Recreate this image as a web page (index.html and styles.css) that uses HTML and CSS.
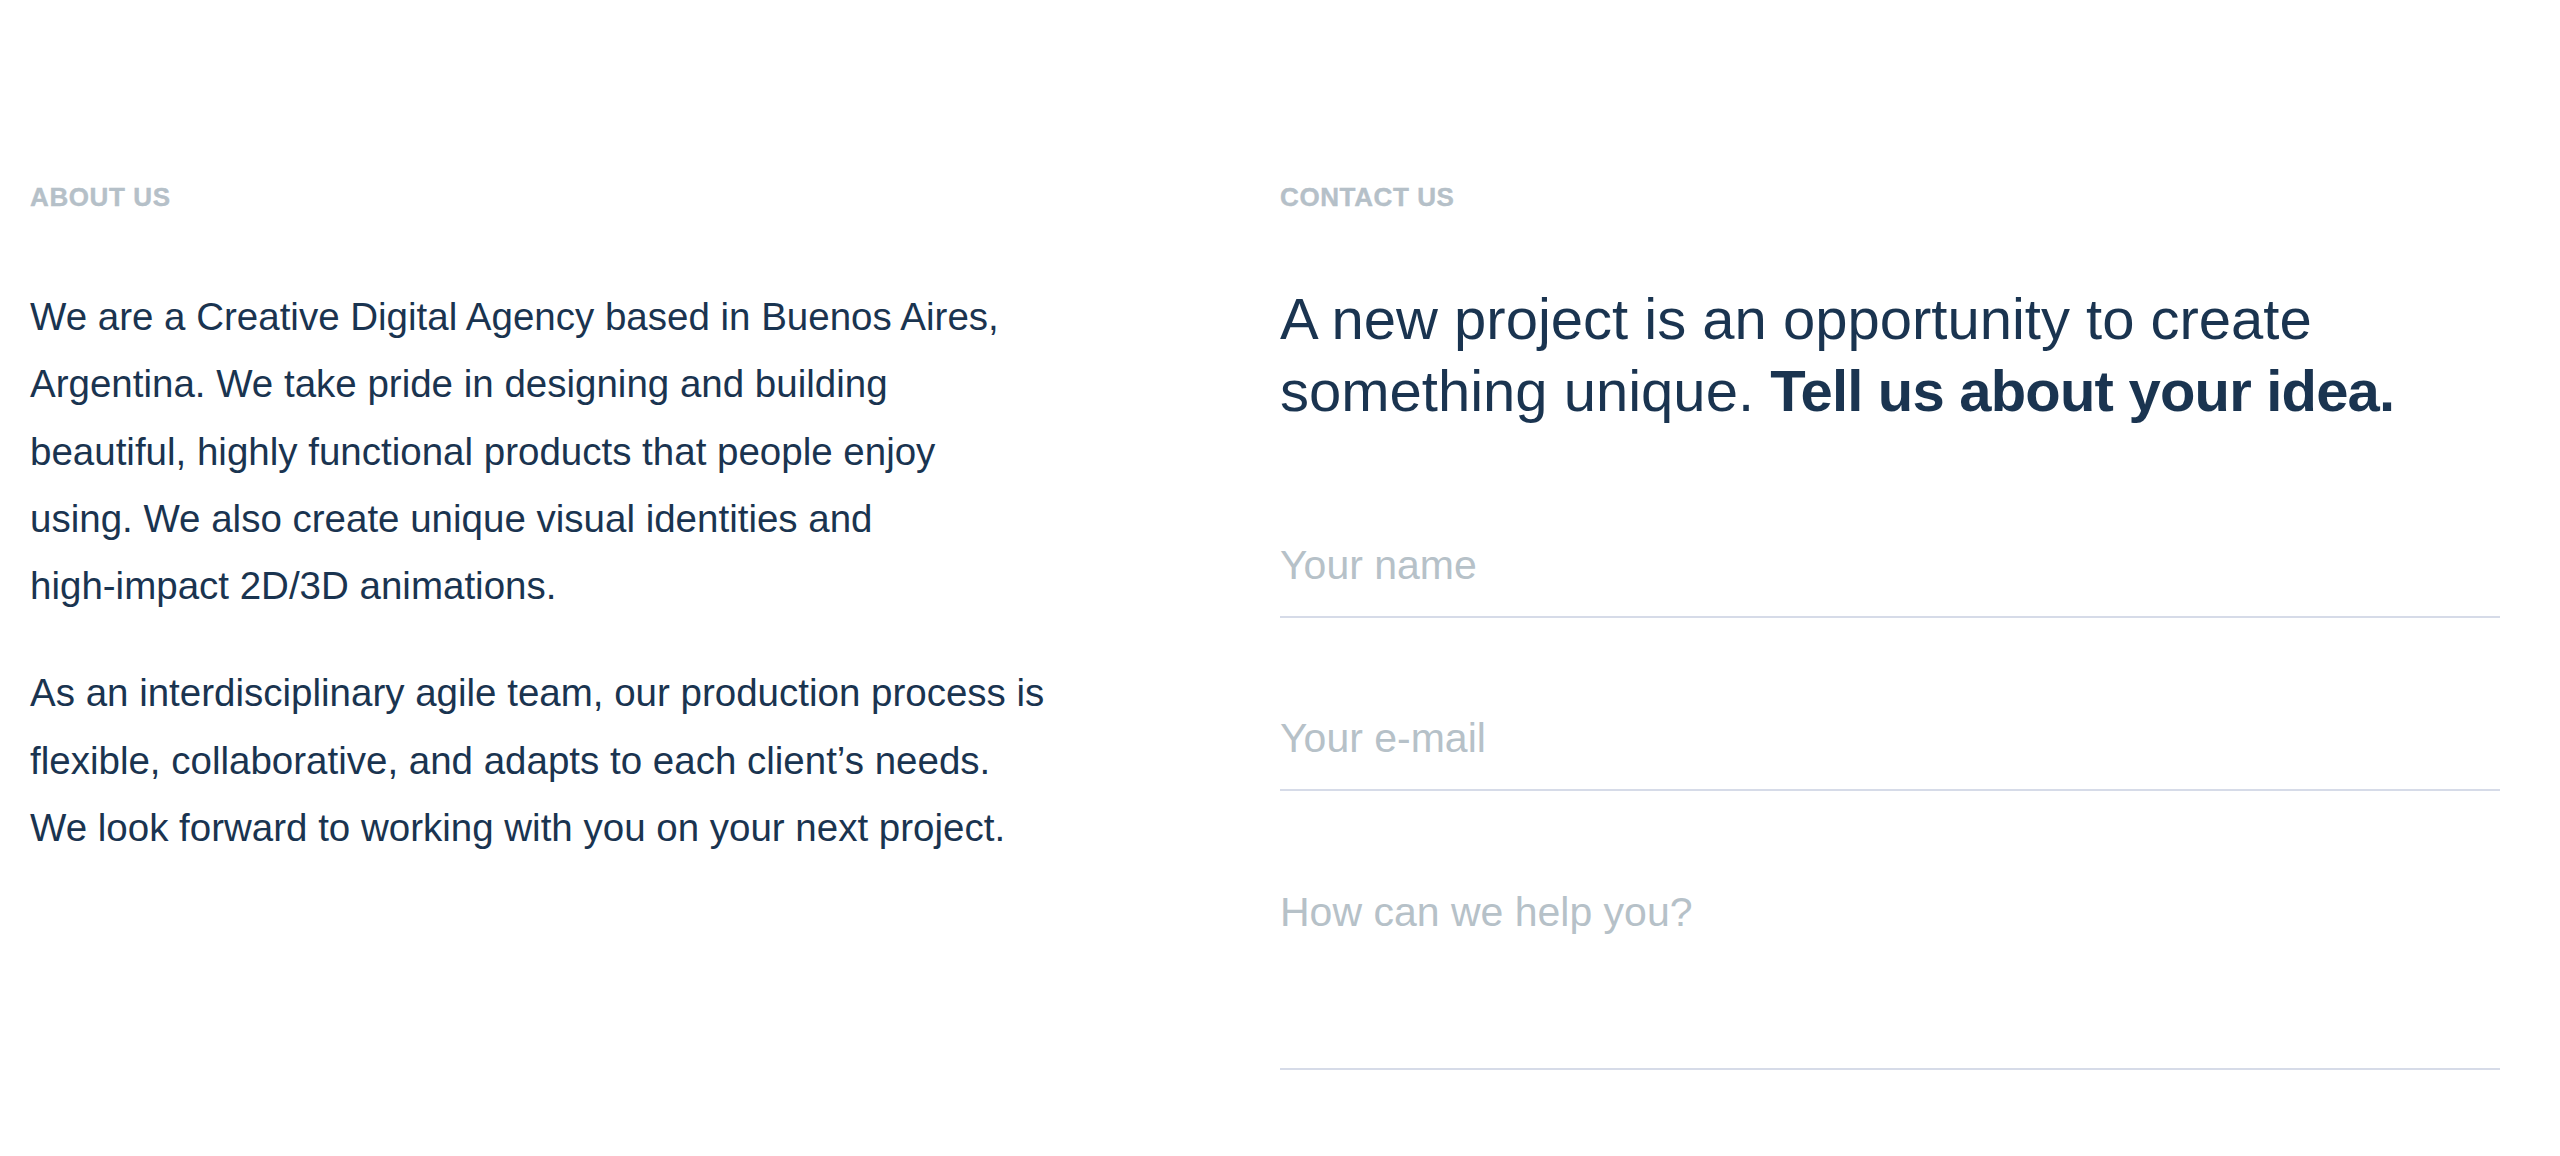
FILE: index.html
```html
<!DOCTYPE html>
<html lang="en">
<head>
<meta charset="utf-8">
<title>About / Contact</title>
<link rel="stylesheet" href="styles.css">
</head>
<body>
<main class="page">
  <section class="col about">
    <h2 class="label">ABOUT US</h2>
    <div class="about-text">
      <p>We are a Creative Digital Agency based in Buenos Aires,<br>Argentina. We take pride in designing and building<br>beautiful, highly functional products that people enjoy<br>using. We also create unique visual identities and<br>high-impact 2D/3D animations.</p>
      <p>As an interdisciplinary agile team, our production process is<br>flexible, collaborative, and adapts to each client’s needs.<br>We look forward to working with you on your next project.</p>
    </div>
  </section>
  <section class="col contact">
    <h2 class="label">CONTACT US</h2>
    <h3 class="headline">A new project is an opportunity to create<br>something unique. <strong>Tell us about your idea.</strong></h3>
    <form class="form">
      <input class="field" type="text" placeholder="Your name">
      <input class="field" type="email" placeholder="Your e-mail">
      <textarea class="field message" placeholder="How can we help you?"></textarea>
    </form>
  </section>
</main>
</body>
</html>
```

FILE: styles.css
```css
html, body {
  margin: 0;
  padding: 0;
  background: #ffffff;
}

body {
  font-family: "Liberation Sans", Arial, sans-serif;
  color: #1a3450;
}

.page {
  display: grid;
  grid-template-columns: 1fr 1fr;
  column-gap: 30px;
  padding: 183.6px 60px 0 30px;
  box-sizing: border-box;
  width: 2560px;
  min-height: 1156px;
}

.label {
  margin: 0 0 73.4px;
  font-size: 26px;
  line-height: 26px;
  font-weight: 700;
  letter-spacing: 0.6px;
  color: #b5c0c8;
  -webkit-text-stroke: 0.4px #b5c0c8;
}

.about-text p {
  margin: 0 0 40px;
  font-size: 38.5px;
  line-height: 67.3px;
  white-space: nowrap;
}

.headline {
  margin: 0;
  font-size: 58px;
  line-height: 72px;
  font-weight: 400;
  white-space: nowrap;
}

.headline strong {
  font-weight: 700;
  letter-spacing: -0.8px;
}

.form {
  display: flex;
  flex-direction: column;
  gap: 96px;
  margin-top: 114px;
}

.field {
  display: block;
  width: 100%;
  box-sizing: border-box;
  margin: 0;
  padding: 0 0 25px;
  border: 0;
  border-bottom: 2px solid #d6dbe8;
  border-radius: 0;
  background: transparent;
  font-family: "Liberation Sans", Arial, sans-serif;
  font-size: 41px;
  line-height: 50px;
  height: 77px;
  color: #1a3450;
  outline: none;
}

.field::placeholder {
  color: #b6c1c8;
  opacity: 1;
}

.message {
  height: 183px;
  resize: none;
  overflow: hidden;
}
```
